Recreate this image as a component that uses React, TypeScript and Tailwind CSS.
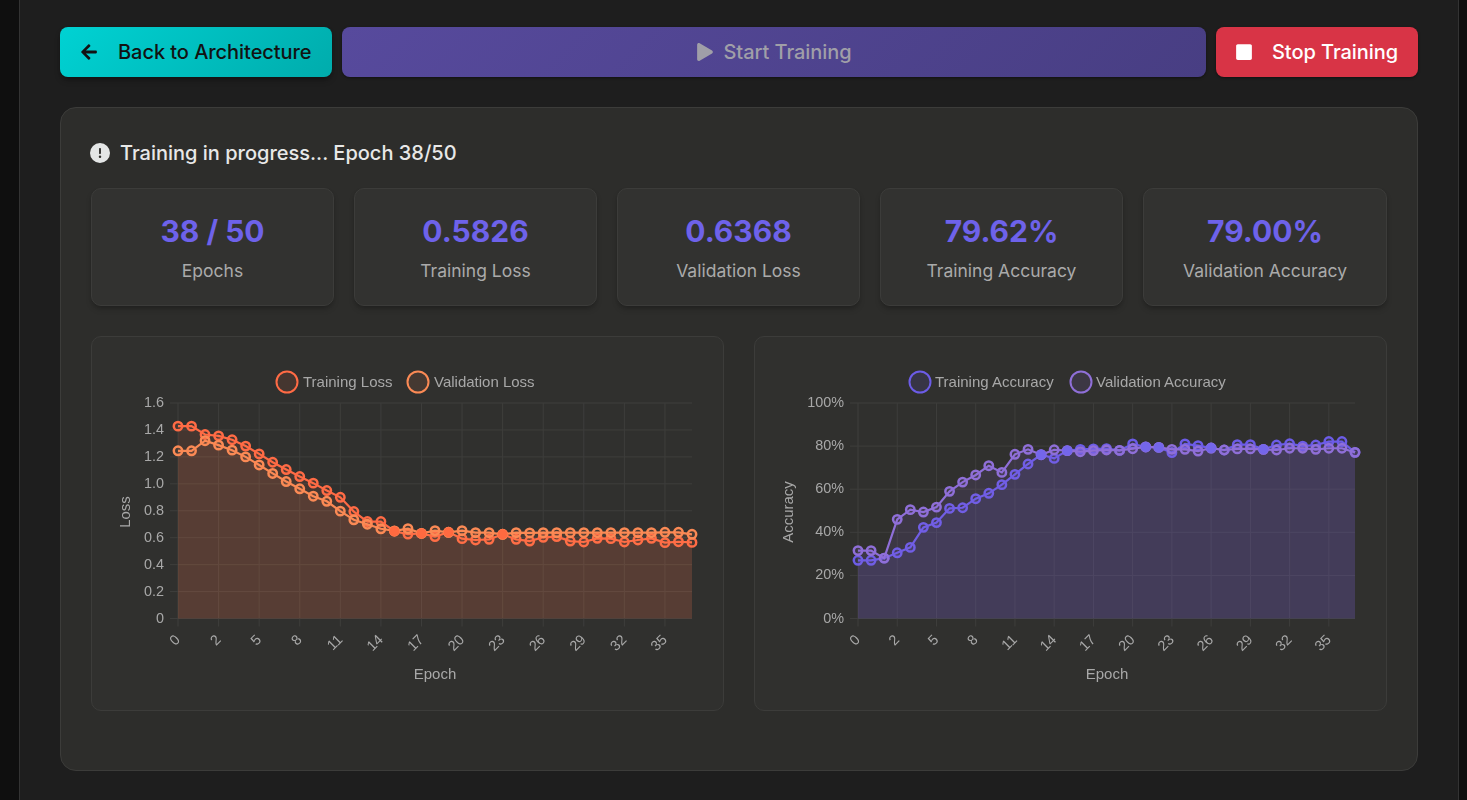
import React from "react"
import { FaArrowLeft, FaPlay, FaStop } from "react-icons/fa"
import { FaCircleExclamation } from "react-icons/fa6"

const stats = [
    { value: "38 / 50", label: "Epochs" },
    { value: "0.5826", label: "Training Loss" },
    { value: "0.6368", label: "Validation Loss" },
    { value: "79.62%", label: "Training Accuracy" },
    { value: "79.00%", label: "Validation Accuracy" },
]

const epochLabels = ["0", "2", "5", "8", "11", "14", "17", "20", "23", "26", "29", "32", "35"]

const trainLoss = [
    1.428, 1.428, 1.366, 1.356, 1.327, 1.28, 1.222, 1.16, 1.106, 1.054, 1.005, 0.95, 0.9, 0.794, 0.72, 0.72, 0.648,
    0.627, 0.632, 0.608, 0.64, 0.593, 0.583, 0.588, 0.625, 0.588, 0.575, 0.603, 0.608, 0.575, 0.568, 0.595, 0.593,
    0.568, 0.583, 0.595, 0.563, 0.57, 0.565,
]
const valLoss = [
    1.245, 1.245, 1.32, 1.287, 1.25, 1.2, 1.14, 1.077, 1.017, 0.963, 0.908, 0.87, 0.797, 0.733, 0.7, 0.666, 0.65,
    0.667, 0.632, 0.652, 0.64, 0.652, 0.637, 0.637, 0.625, 0.637, 0.635, 0.637, 0.637, 0.637, 0.637, 0.637, 0.637,
    0.637, 0.637, 0.637, 0.64, 0.64, 0.625,
]
const trainAcc = [
    27, 27, 28, 30.5, 33, 42.3, 44.5, 51.1, 51.4, 55.6, 58.1, 62.1, 66.9, 71.7, 76, 74.3, 77.9, 78.5, 78.7, 78.8, 78,
    81, 79.6, 79.4, 77, 81, 80.2, 79.1, 78.2, 80.7, 80.7, 78.5, 80.5, 81.1, 80, 80.5, 82.1, 82.1, 77.1,
]
const valAcc = [
    31.5, 31.5, 28, 46, 50.5, 49.4, 51.7, 59, 63.3, 66.6, 70.9, 67.8, 76.2, 78.5, 76, 78.3, 77.9, 77.4, 77.9, 78.2, 78,
    78.8, 79.6, 79.4, 78.5, 78.5, 77.7, 79.1, 78.2, 78.7, 78.7, 78.5, 78.2, 79, 79, 78.5, 79, 79, 77.1,
]

type Series = { label: string; data: number[]; color: string; fill: string; legendX: number; textX: number }

type ChartProps = {
    left: number
    right: number
    max: number
    yTicks: { label: string; value: number }[]
    yTitle: string
    xTitleX: number
    series: Series[]
    // epochs where both lines sit on the same spot and the dots read as solid
    solid: number[]
    solidColor: string
}

const TOP = 66
const BOTTOM = 281.5

const Chart = ({ left, right, max, yTicks, yTitle, xTitleX, series, solid, solidColor }: ChartProps) => {
    const xAt = (i: number) => left + ((right - left) * i) / 38
    const yAt = (v: number) => BOTTOM - ((BOTTOM - TOP) * v) / max
    const grid = "#3e3e3c"

    return (
        <svg viewBox="0 0 631 373" className="block h-full w-full blur-[0.5px]">
            {yTicks.map((t) => (
                <g key={t.label}>
                    <line x1={left - 8} x2={right} y1={yAt(t.value)} y2={yAt(t.value)} stroke={grid} />
                    <text x={left - 14} y={yAt(t.value) + 4} textAnchor="end" fontSize="14.4" fill="#a8a8a8">
                        {t.label}
                    </text>
                </g>
            ))}
            {epochLabels.map((label, i) => {
                const x = xAt(i * 3)
                return (
                    <g key={label}>
                        <line x1={x} x2={x} y1={TOP} y2={BOTTOM + 8} stroke={grid} />
                        <text
                            x={x + 3}
                            y={BOTTOM + 22}
                            textAnchor="end"
                            fontSize="14.4"
                            fill="#a8a8a8"
                            transform={`rotate(-45 ${x + 3} ${BOTTOM + 22})`}
                        >
                            {label}
                        </text>
                    </g>
                )
            })}
            <text x={xTitleX} y={342} textAnchor="middle" fontSize="15" fill="#a8a8a8">
                Epoch
            </text>
            <text x={38} y={175} textAnchor="middle" fontSize="15" fill="#a8a8a8" transform="rotate(-90 38 175)">
                {yTitle}
            </text>
            {series.map((s) => (
                <g key={s.label}>
                    <circle cx={s.legendX} cy={45} r={10.5} fill={s.fill} stroke={s.color} strokeWidth={2} />
                    <text x={s.textX} y={50} fontSize="15" fill="#a8a8a8">
                        {s.label}
                    </text>
                </g>
            ))}
            {series.map((s) => {
                const points = s.data.map((v, i) => `${xAt(i)},${yAt(v)}`).join(" ")
                return (
                    <g key={s.label}>
                        <polygon
                            points={`${xAt(0)},${BOTTOM} ${points} ${xAt(38)},${BOTTOM}`}
                            fill={s.fill}
                        />
                        <polyline points={points} fill="none" stroke={s.color} strokeWidth={2.2} />
                        {s.data.map((v, i) => (
                            <circle
                                key={i}
                                cx={xAt(i)}
                                cy={yAt(v)}
                                r={4.2}
                                fill={s.fill}
                                stroke={s.color}
                                strokeWidth={2.5}
                            />
                        ))}
                    </g>
                )
            })}
            {solid.map((i) => (
                <circle key={i} cx={xAt(i)} cy={yAt(series[0].data[i])} r={5} fill={solidColor} />
            ))}
        </svg>
    )
}

const lossTicks = ["0", "0.2", "0.4", "0.6", "0.8", "1.0", "1.2", "1.4", "1.6"].map((label) => ({
    label,
    value: Number(label),
}))
const accTicks = [0, 20, 40, 60, 80, 100].map((value) => ({ label: `${value}%`, value }))

export default function App() {
    return (
        <div className="h-screen overflow-hidden bg-[#0f0f0f] font-['Inter',sans-serif]">
            <div className="ml-[19px] h-full w-[1440px] border-x border-[#333333] bg-[#1e1e1e] px-10 pt-[27px]">
                <div className="flex gap-2.5">
                    <button className="flex h-[50px] w-[272px] items-center rounded-lg bg-linear-135 from-[#00d2d3] to-[#00acac] pl-5 text-[20px] font-medium tracking-[-0.05px] text-[#121212] shadow-md shadow-black/30">
                        <FaArrowLeft className="mr-5 text-[18px]" />
                        Back to Architecture
                    </button>
                    <button className="flex h-[50px] flex-1 items-center justify-center rounded-lg bg-linear-135 from-[#574a9d] to-[#483e83] text-[20px] font-medium tracking-[-0.05px] text-[#a09fa8] shadow-sm shadow-black/30">
                        <FaPlay className="mr-[9px] text-[18px]" />
                        Start Training
                    </button>
                    <button className="flex h-[50px] w-[202px] items-center rounded-lg bg-[#d83446] pl-[19px] text-[20px] font-medium tracking-[-0.05px] text-white shadow-sm shadow-black/30">
                        <FaStop className="mr-[19px] text-[18px]" />
                        Stop Training
                    </button>
                </div>

                <div className="mt-[30px] h-[664px] rounded-2xl border border-[#3c3c3a] bg-[#2d2d2b] p-[30px]">
                    <div className="-ml-px flex h-[30px] items-center text-[20px] font-medium text-[#e8e8e8]">
                        <FaCircleExclamation className="mr-[11px] text-[20px] text-[#e4e6e6]" />
                        <span className="-ml-px">Training in progress... Epoch 38/50</span>
                    </div>

                    <div className="mt-5 grid grid-cols-[243px_243px_243px_243px_244px] gap-5">
                        {stats.map((s) => (
                            <div
                                key={s.label}
                                className="flex h-[118px] flex-col items-center rounded-[10px] border border-[#3c3c3a] bg-[#323230] pt-5 shadow-md shadow-black/20"
                            >
                                <div className="text-[30px] leading-[44px] font-bold text-[#6e62ea]">{s.value}</div>
                                <div className="mt-[6px] text-[17.5px] leading-6 text-[#aaaaaa]">{s.label}</div>
                            </div>
                        ))}
                    </div>

                    <div className="mt-[30px] grid grid-cols-2 gap-[30px] font-['Liberation_Sans',Arial,sans-serif]">
                        <div className="h-[375px] rounded-[10px] border border-[#3c3c3a] bg-[#30302e]">
                            <Chart
                                left={86}
                                right={600}
                                max={1.6}
                                yTicks={lossTicks}
                                yTitle="Loss"
                                xTitleX={343}
                                solid={[16, 18, 20, 24]}
                                solidColor="#ff6a40"
                                series={[
                                    {
                                        label: "Training Loss",
                                        data: trainLoss,
                                        color: "#ff6b45",
                                        fill: "rgba(255,110,70,0.1)",
                                        legendX: 195,
                                        textX: 211,
                                    },
                                    {
                                        label: "Validation Loss",
                                        data: valLoss,
                                        color: "#fb8a55",
                                        fill: "rgba(255,140,90,0.1)",
                                        legendX: 326,
                                        textX: 342,
                                    },
                                ]}
                            />
                        </div>
                        <div className="h-[375px] rounded-[10px] border border-[#3c3c3a] bg-[#30302e]">
                            <Chart
                                left={103}
                                right={600}
                                max={100}
                                yTicks={accTicks}
                                yTitle="Accuracy"
                                xTitleX={352}
                                solid={[14, 16, 22, 23, 27, 31]}
                                solidColor="#7466ea"
                                series={[
                                    {
                                        label: "Training Accuracy",
                                        data: trainAcc,
                                        color: "#6c5ce7",
                                        fill: "rgba(108,92,231,0.13)",
                                        legendX: 165,
                                        textX: 180,
                                    },
                                    {
                                        label: "Validation Accuracy",
                                        data: valAcc,
                                        color: "#8f6fd8",
                                        fill: "rgba(143,111,216,0.13)",
                                        legendX: 326,
                                        textX: 341,
                                    },
                                ]}
                            />
                        </div>
                    </div>
                </div>
            </div>
        </div>
    )
}
